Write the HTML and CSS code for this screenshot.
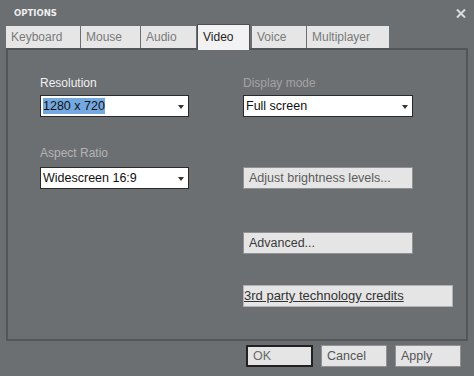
FILE: index.html
```html
<!DOCTYPE html>
<html lang="en">
<head>
    <meta charset="UTF-8">
    <title>Options</title>
    <link rel="stylesheet" href="styles.css">
</head>
<body>
<div class="dialog">
    <div class="titlebar">
        <span class="title">OPTIONS</span>
        <svg class="close" width="10" height="9" viewBox="0 0 10 9">
            <path d="M1 0.5 L9 8.5 M9 0.5 L1 8.5" stroke="#dcdcdc" stroke-width="2"/>
        </svg>
    </div>

    <!-- tabs -->
    <div class="tabs">
        <div class="tab tab_keyboard">Keyboard</div>
        <div class="tab tab_mouse">Mouse</div>
        <div class="tab tab_audio">Audio</div>
        <div class="tab tab_video active">Video</div>
        <div class="tab tab_voice">Voice</div>
        <div class="tab tab_multi">Multiplayer</div>
    </div>

    <div class="panel">
        <div class="col col_left">
            <div class="label">Resolution</div>
            <div class="select">
                <span class="picked">1280 x 720</span>
                <span class="arrow"></span>
            </div>
            <div class="label dim gap_aspect">Aspect Ratio</div>
            <div class="select">
                <span>Widescreen 16:9</span>
                <span class="arrow"></span>
            </div>
        </div>
        <div class="col col_right">
            <div class="label dimmer">Display mode</div>
            <div class="select">
                <span>Full screen</span>
                <span class="arrow"></span>
            </div>
            <div class="btn btn_faded gap_bright">Adjust brightness levels...</div>
            <div class="btn gap_adv">Advanced...</div>
            <div class="btn credits">3rd party technology credits</div>
        </div>
    </div>

    <div class="footer">
        <div class="btn btn_small btn_ok">OK</div>
        <div class="btn btn_small">Cancel</div>
        <div class="btn btn_small">Apply</div>
    </div>
</div>
</body>
</html>
```

FILE: styles.css
```css
body {
    margin: 0;
    background-color: #6c6f71;
    font-family: "Liberation Sans", Arial, sans-serif;
    font-size: 12px;
}

.dialog {
    width: 474px;
    height: 376px;
}

.titlebar {
    height: 26px;
    display: flex;
    justify-content: space-between;
    align-items: flex-start;
    padding: 0 8px 0 14px;
    box-sizing: border-box;
}

.title {
    margin-top: 8px;
    font-family: "DejaVu Sans", sans-serif;
    font-weight: bold;
    font-size: 8.5px;
    color: #eeeeee;
}

.close {
    margin-top: 9px;
}

.tabs {
    display: flex;
    align-items: flex-end;
    height: 22px;
    margin-left: 6px;
}

.tab {
    height: 22px;
    line-height: 22px;
    padding-left: 5px;
    box-sizing: border-box;
    background-color: #e6e6e6;
    color: #7a7a7a;
    font-size: 12px;
    margin-right: 1px;
}

.tab_keyboard { width: 74px; }
.tab_mouse { width: 59px; }
.tab_audio { width: 55px; }
.tab_video { width: 53px; }
.tab_voice { width: 54px; }
.tab_multi { width: 82px; }

.tab.active {
    height: 26px;
    line-height: 24px;
    margin-bottom: -2px;
    margin-right: 2px;
    background-color: #f2f2f2;
    color: #1e1e1e;
    border: 1px solid #4e5153;
    border-bottom: none;
    position: relative;
    z-index: 1;
}

.panel {
    height: 293px;
    margin: 0 6px;
    border: 2px solid #535658;
    box-sizing: border-box;
    display: flex;
    padding-left: 32px;
}

.col {
    display: flex;
    flex-direction: column;
    align-items: flex-start;
    padding-top: 25px;
}

.col_left {
    width: 149px;
    margin-right: 54px;
}

.label {
    height: 16px;
    line-height: 16px;
    color: #f0f0f0;
    margin-bottom: 4px;
}

.label.dim {
    color: #b4b4b4;
}

.label.dimmer {
    color: #a3a3a3;
}

.gap_aspect {
    margin-top: 28px;
    margin-bottom: 6px;
}

.select {
    width: 149px;
    height: 22px;
    box-sizing: border-box;
    background-color: #ffffff;
    border: 1px solid #2a2a2a;
    display: flex;
    align-items: center;
    justify-content: space-between;
    padding: 0 4px 0 2px;
    color: #111111;
    font-size: 12.5px;
}

.col_right .select {
    width: 170px;
}

.picked {
    background-color: #74a8e0;
    padding: 1px 0;
}

.arrow {
    width: 0;
    height: 0;
    border-left: 3.5px solid transparent;
    border-right: 3.5px solid transparent;
    border-top: 4px solid #333333;
    margin-top: 1px;
}

.btn {
    width: 170px;
    height: 22px;
    line-height: 20px;
    box-sizing: border-box;
    background-color: #e5e5e5;
    border: 1px solid #8f9193;
    padding-left: 5px;
    color: #3a3a3a;
    font-size: 12.5px;
}

.btn_faded {
    color: #5c5c5c;
}

.gap_bright {
    margin-top: 50px;
}

.gap_adv {
    margin-top: 43px;
}

.credits {
    width: 210px;
    margin-top: 31px;
    padding-left: 0;
    border-color: #b0b2b4;
    font-size: 13px;
    text-decoration: underline;
    color: #333333;
}

.footer {
    display: flex;
    justify-content: flex-end;
    margin-top: 4px;
    padding-right: 13px;
}

.btn_small {
    width: 66px;
    margin-left: 8px;
    color: #555555;
}

.btn_ok {
    width: 67px;
    border: 2px solid #222222;
    line-height: 18px;
    padding-left: 5px;
    color: #6a6a6a;
}
```
